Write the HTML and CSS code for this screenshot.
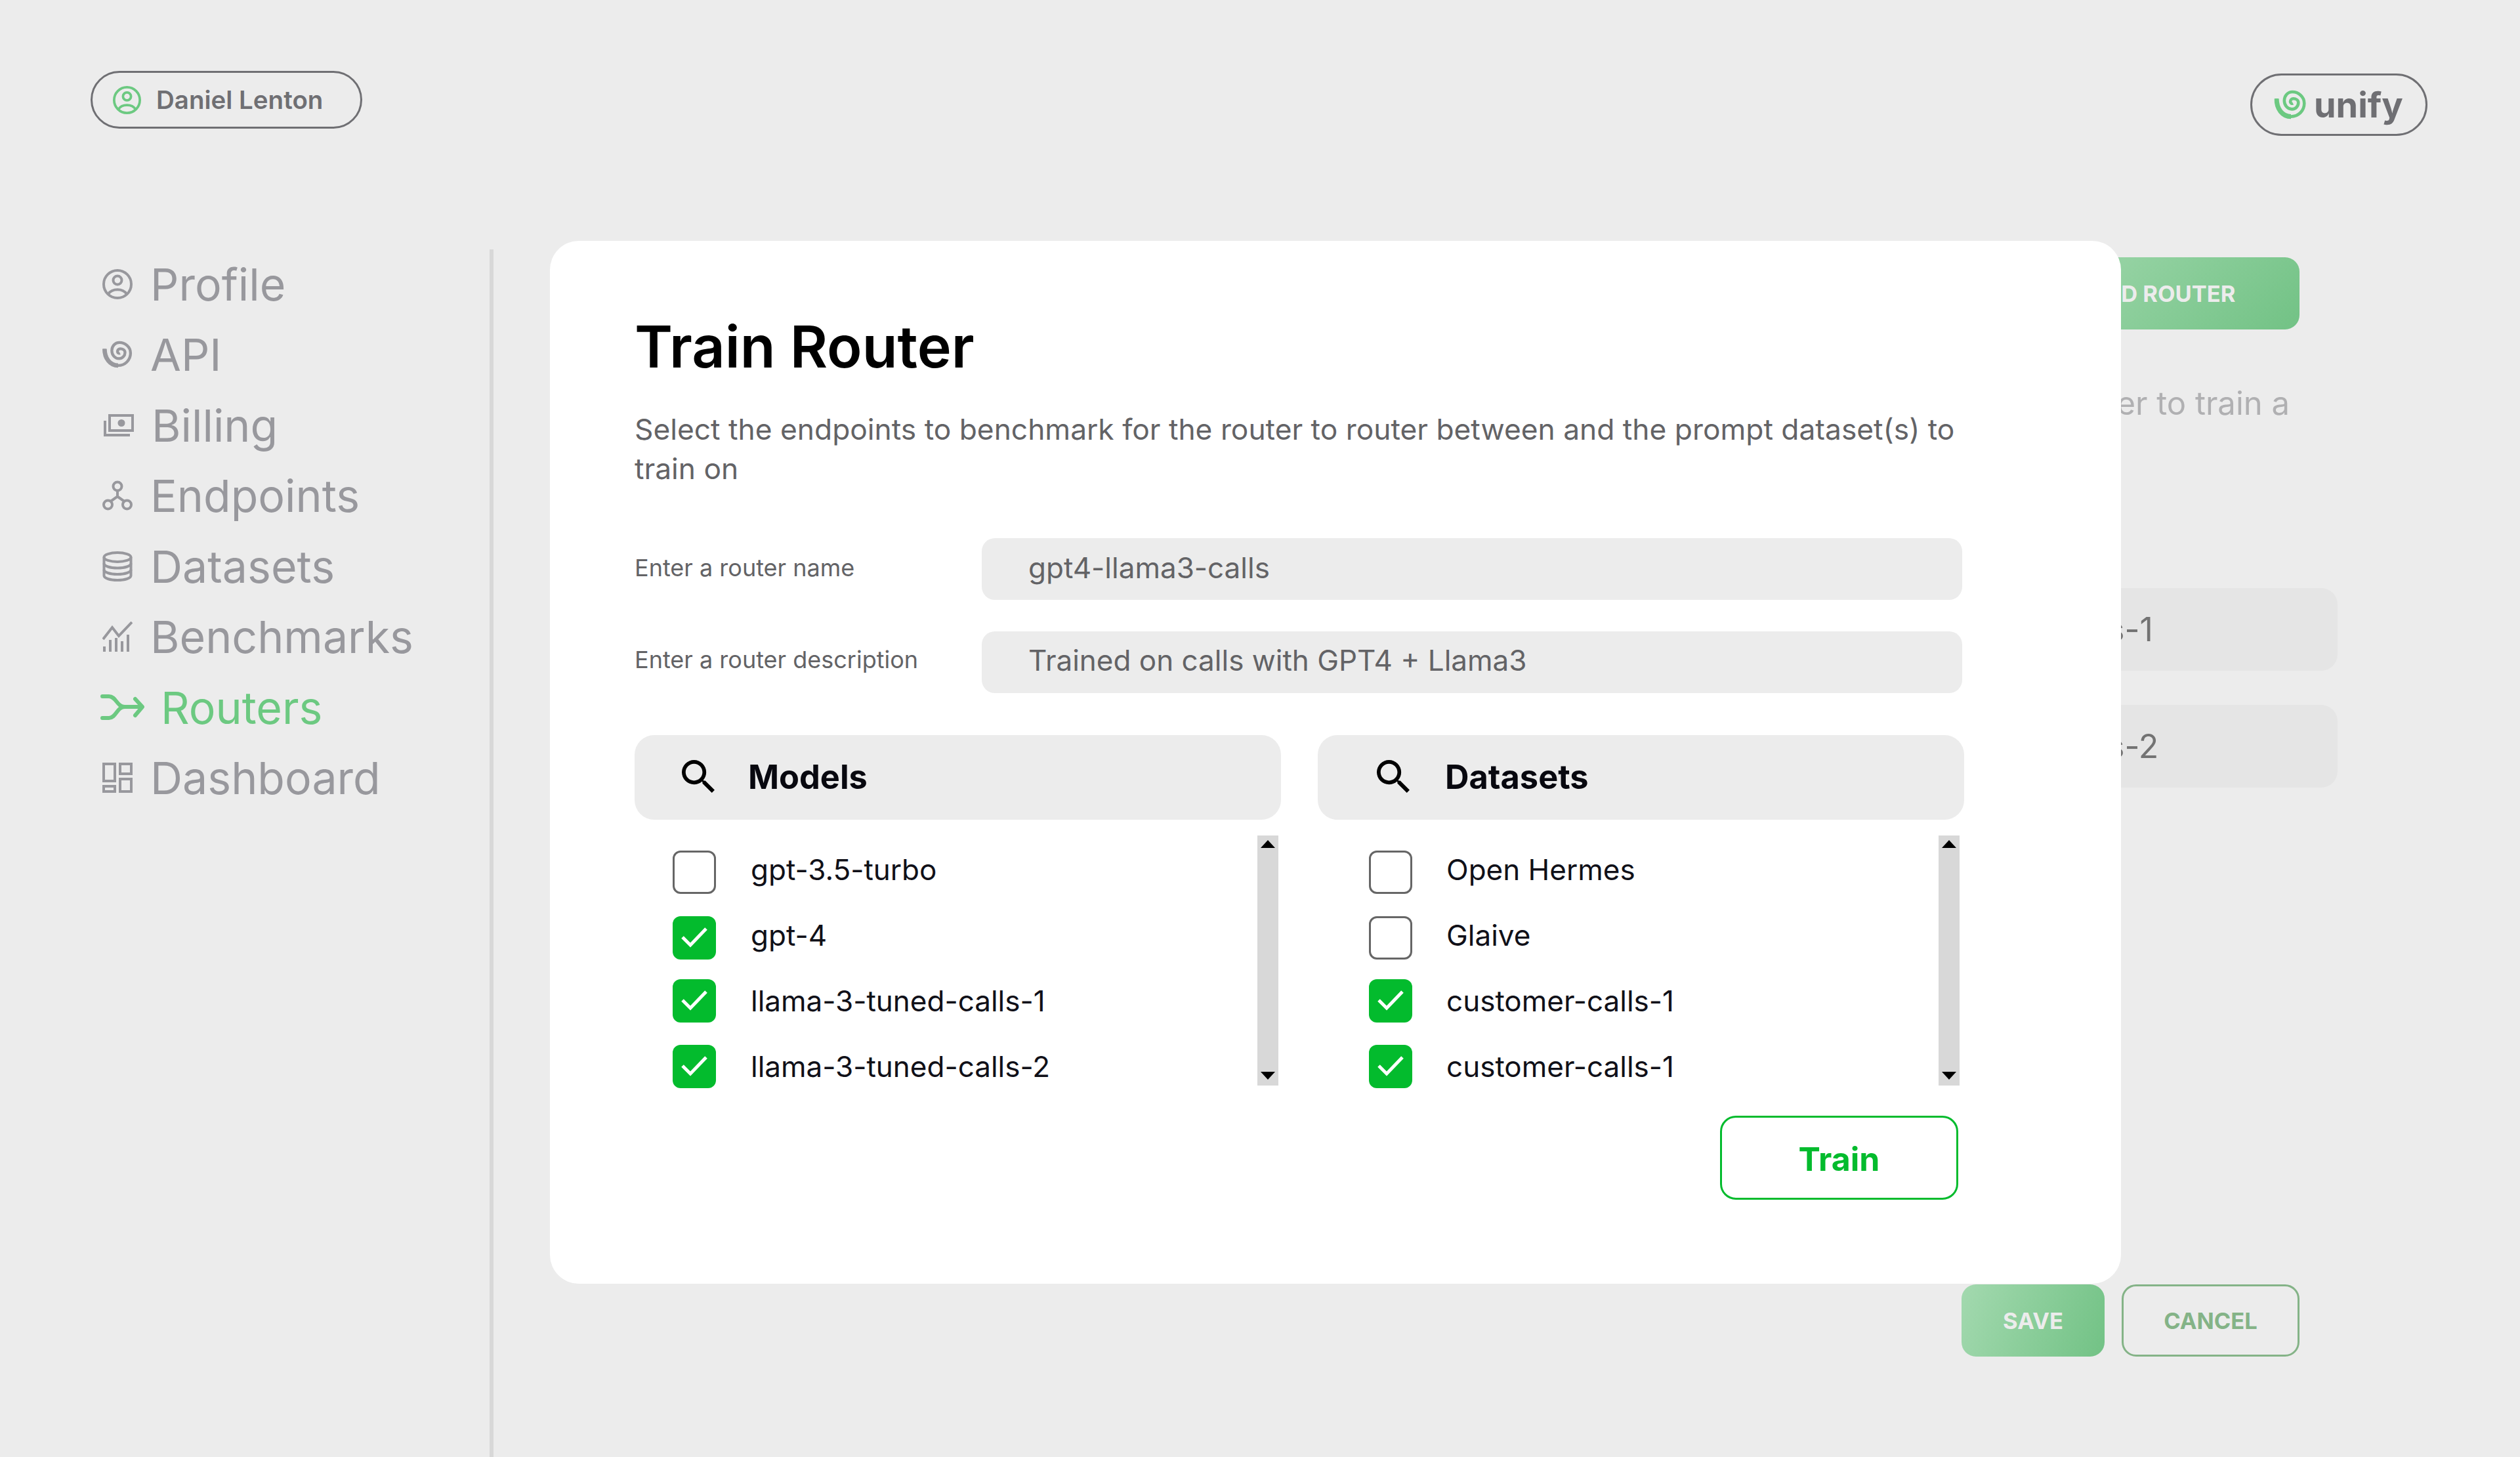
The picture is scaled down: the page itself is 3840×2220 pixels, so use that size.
FILE: index.html
```html
<!DOCTYPE html>
<html lang="en">
<head>
  <meta charset="UTF-8">
  <title>Train Router</title>
  <link rel="stylesheet" href="styles.css">
</head>
<body>

  <div class="page">
    <header class="topbar">
      <div class="user-pill">
        <svg class="user-icon" viewBox="0 0 46 46"><use href="#icon-profile"></use></svg>
        <span>Daniel Lenton</span>
      </div>
      <div class="logo-pill">
        <svg class="logo-icon" viewBox="0 0 48 44"><use href="#icon-spiral"></use></svg>
        <span>unify</span>
      </div>
    </header>

    <nav class="sidebar">
      <a class="nav-item"><svg class="nav-icon" viewBox="0 0 46 46"><use href="#icon-profile"></use></svg>Profile</a>
      <a class="nav-item"><svg class="nav-icon" viewBox="0 0 48 44"><use href="#icon-spiral"></use></svg>API</a>
      <a class="nav-item nav-item--billing">
        <svg class="nav-icon" viewBox="0 0 46 34">
          <path d="M9 2h35v23H9z" fill="none" stroke="currentColor" stroke-width="4"/>
          <circle cx="27" cy="13.5" r="5.5" fill="currentColor"/>
          <path d="M2 10v22h38" fill="none" stroke="currentColor" stroke-width="4"/>
        </svg>Billing</a>
      <a class="nav-item">
        <svg class="nav-icon" viewBox="0 0 46 46" fill="none" stroke="currentColor" stroke-width="4">
          <circle cx="23" cy="9" r="6.5"/>
          <circle cx="8.5" cy="37" r="6.5"/>
          <circle cx="37.5" cy="37" r="6.5"/>
          <path d="M23 15.5v9L12.5 32M23 24.5L33.5 32"/>
        </svg>Endpoints</a>
      <a class="nav-item">
        <svg class="nav-icon" viewBox="0 0 46 46" fill="none" stroke="currentColor" stroke-width="4">
          <ellipse cx="23" cy="9" rx="20.5" ry="7"/>
          <path d="M2.5 9v28c0 4 9 7 20.5 7s20.5-3 20.5-7V9"/>
          <path d="M2.5 18.5c0 4 9 7 20.5 7s20.5-3 20.5-7M2.5 28c0 4 9 7 20.5 7s20.5-3 20.5-7"/>
        </svg>Datasets</a>
      <a class="nav-item">
        <svg class="nav-icon" viewBox="0 0 46 46">
          <path d="M1 27L15 9l10 13L45 1" fill="none" stroke="currentColor" stroke-width="4"/>
          <path d="M1 38h4v8H1zM10 28h4v18h-4zM19 25h4v21h-4zM28 30h4v16h-4zM37 20h4v26h-4z" fill="currentColor"/>
        </svg>Benchmarks</a>
      <a class="nav-item nav-item--active">
        <svg class="nav-icon" viewBox="0 0 67 41" fill="none" stroke="currentColor" stroke-width="6" stroke-linecap="round" stroke-linejoin="round">
          <path d="M3 4h10c11 0 12 16 24 16h26M3 37h10c11 0 12-17 24-17"/>
          <path d="M53 8l11 12-11 13"/>
        </svg>Routers</a>
      <a class="nav-item">
        <svg class="nav-icon" viewBox="0 0 46 46" fill="none" stroke="currentColor" stroke-width="4">
          <path d="M2 2h17v26H2zM27 2h17v15H27zM2 36h17v8H2zM27 25h17v19H27z"/>
        </svg>Dashboard</a>
    </nav>

    <main class="content">
      <button class="add-btn" type="button">ADD ROUTER</button>
      <p class="content-desc">a router to train a</p>
      <div class="router-list">
        <div class="router-row">llama-3-tuned-calls-1</div>
        <div class="router-row">llama-3-tuned-calls-2</div>
      </div>
      <div class="actions">
        <button class="save-btn" type="button">SAVE</button>
        <button class="cancel-btn" type="button">CANCEL</button>
      </div>
    </main>
  </div>

  <div class="modal">
    <h1>Train Router</h1>
    <p class="modal-desc">Select the endpoints to benchmark for the router to router between and the prompt dataset(s) to train on</p>

    <div class="field">
      <label>Enter a router name</label>
      <div class="field-value">gpt4-llama3-calls</div>
    </div>
    <div class="field">
      <label>Enter a router description</label>
      <div class="field-value">Trained on calls with GPT4 + Llama3</div>
    </div>

    <div class="pickers">
      <section class="picker">
        <div class="picker-head">
          <svg class="search-icon" viewBox="0 0 17.5 17.5"><use href="#icon-search"></use></svg>
          <span>Models</span>
        </div>
        <div class="picker-body">
          <ul class="picker-list">
            <li class="item"><span class="check"></span>gpt-3.5-turbo</li>
            <li class="item"><span class="check check--on"><svg viewBox="0 0 66 66"><use href="#icon-check"></use></svg></span>gpt-4</li>
            <li class="item"><span class="check check--on"><svg viewBox="0 0 66 66"><use href="#icon-check"></use></svg></span>llama-3-tuned-calls-1</li>
            <li class="item"><span class="check check--on"><svg viewBox="0 0 66 66"><use href="#icon-check"></use></svg></span>llama-3-tuned-calls-2</li>
          </ul>
          <div class="scrollbar"><i class="arrow-up"></i><i class="arrow-down"></i></div>
        </div>
      </section>

      <section class="picker picker--datasets">
        <div class="picker-head">
          <svg class="search-icon" viewBox="0 0 17.5 17.5"><use href="#icon-search"></use></svg>
          <span>Datasets</span>
        </div>
        <div class="picker-body">
          <ul class="picker-list">
            <li class="item"><span class="check"></span>Open Hermes</li>
            <li class="item"><span class="check"></span>Glaive</li>
            <li class="item"><span class="check check--on"><svg viewBox="0 0 66 66"><use href="#icon-check"></use></svg></span>customer-calls-1</li>
            <li class="item"><span class="check check--on"><svg viewBox="0 0 66 66"><use href="#icon-check"></use></svg></span>customer-calls-1</li>
          </ul>
          <div class="scrollbar"><i class="arrow-up"></i><i class="arrow-down"></i></div>
        </div>
      </section>
    </div>

    <div class="modal-foot">
      <button class="train-btn" type="button">Train</button>
    </div>
  </div>

  <svg class="icon-defs" aria-hidden="true">
    <symbol id="icon-profile" viewBox="0 0 46 46">
      <g fill="none" stroke="currentColor" stroke-width="4">
        <circle cx="23" cy="23" r="21"/>
        <circle cx="23" cy="17" r="6.5"/>
        <path d="M9 38c6-9 22-9 28 0"/>
      </g>
    </symbol>
    <symbol id="icon-spiral" viewBox="0 0 48 44">
      <g fill="none" stroke="currentColor">
        <path d="M3.5 13C3.5 28 12 39.7 25 39.7C36 39.7 44.8 31 44.8 20C44.8 10 36 3 27 3C20 3 15 9 15 16C15 23 20 28.7 26.5 28.7C32 28.7 36 24 36 19C36 15 32 13 28.5 13C26 13 24 15 24 17.5C24 19.5 26 21 28 20" stroke-width="4.5"/>
        <path d="M3.5 13C3.5 28 12 39.7 25 39.7" stroke-width="7"/>
      </g>
    </symbol>
    <symbol id="icon-search" viewBox="3 3 17.5 17.5">
      <path d="M15.5 14h-.79l-.28-.27A6.471 6.471 0 0 0 16 9.5 6.5 6.5 0 1 0 9.5 16c1.61 0 3.09-.59 4.23-1.57l.27.28v.79l5 4.99L20.49 19l-4.99-5zm-6 0C7.01 14 5 11.99 5 9.5S7.01 5 9.5 5 14 7.01 14 9.5 11.99 14 9.5 14z"/>
    </symbol>
    <symbol id="icon-check" viewBox="0 0 66 66">
      <path d="M15 32l12 12 24-25" fill="none" stroke="#fff" stroke-width="5"/>
    </symbol>
  </svg>

</body>
</html>
```

FILE: styles.css
```css
* {
  box-sizing: border-box;
}

body {
  margin: 0;
  width: 3840px;
  height: 2220px;
  overflow: hidden;
  position: relative;
  background: #ececec;
  font-family: 'Inter', 'Liberation Sans', sans-serif;
}

button {
  font-family: inherit;
  cursor: pointer;
}

.icon-defs {
  display: none;
}

.page {
  display: grid;
  grid-template-columns: 752px 1fr;
  grid-template-rows: 380px 1fr;
  height: 2220px;
}

/* top bar */
.topbar {
  grid-column: 1 / 3;
  display: flex;
  justify-content: space-between;
  align-items: flex-start;
  padding: 108px 141px 0 138px;
}

.user-pill {
  display: flex;
  align-items: center;
  gap: 23px;
  width: 414px;
  height: 88px;
  padding-left: 31px;
  border: 3px solid #6f6f73;
  border-radius: 44px;
  font-size: 38.5px;
  font-weight: 600;
  color: #6f6f73;
}

.user-icon {
  width: 43px;
  height: 43px;
  color: #6cc981;
}

.logo-pill {
  display: flex;
  align-items: center;
  gap: 11px;
  width: 270px;
  height: 95px;
  margin-top: 4px;
  padding-left: 33px;
  border: 3px solid #6f6f73;
  border-radius: 48px;
  font-size: 54px;
  font-weight: 700;
  color: #6f6f73;
}

.logo-icon {
  width: 50px;
  height: 45px;
  color: #6cc981;
}

/* sidebar */
.sidebar {
  display: flex;
  flex-direction: column;
  padding-left: 156px;
  border-right: 6px solid #d8d8d8;
}

.nav-item {
  display: flex;
  align-items: center;
  gap: 27px;
  height: 107.5px;
  padding-bottom: 2px;
  font-size: 68px;
  color: #98989d;
}

.nav-icon {
  width: 46px;
  height: 46px;
  flex-shrink: 0;
}

.nav-item--billing .nav-icon {
  height: 34px;
  margin-left: 2px;
}

.nav-item--active {
  color: #6cc981;
  gap: 25px;
}

.nav-item--active .nav-icon {
  width: 67px;
  height: 41px;
  margin-left: -3px;
}

/* page behind the dialog */
.content {
  display: flex;
  flex-direction: column;
  padding: 12px 336px 153px 0;
}

.add-btn {
  align-self: flex-end;
  width: 428px;
  height: 110px;
  padding-left: 14px;
  border: none;
  border-radius: 22px;
  background: linear-gradient(135deg, #a3d9af, #72c285);
  color: #ececec;
  font-size: 34.5px;
  font-weight: 700;
}

.content-desc {
  margin: 83px 15px 0 0;
  line-height: 60px;
  font-size: 49px;
  text-align: right;
  color: #b0b0b2;
}

.router-list {
  align-self: flex-end;
  display: flex;
  flex-direction: column;
  gap: 52px;
  width: 842px;
  margin: 251px -58px 0 0;
}

.router-row {
  height: 126px;
  padding-left: 51px;
  line-height: 126px;
  border-radius: 25px;
  background: #e5e5e5;
  font-size: 50px;
  color: #737373;
}

.actions {
  display: flex;
  justify-content: flex-end;
  gap: 26px;
  margin-top: auto;
}

.save-btn,
.cancel-btn {
  height: 110px;
  border-radius: 22px;
  font-size: 34.5px;
  font-weight: 700;
}

.save-btn {
  width: 218px;
  border: none;
  background: linear-gradient(110deg, #a3d9af, #72c285);
  color: #ececec;
}

.cancel-btn {
  width: 271px;
  border: 3px solid #84b387;
  background: transparent;
  color: #84b387;
}

/* dialog */
.modal {
  position: absolute;
  left: 838px;
  top: 367px;
  width: 2394px;
  height: 1589px;
  padding: 105px 239px 0 129px;
  border-radius: 44px;
  background: #fff;
}

.modal h1 {
  margin: 0;
  line-height: 112px;
  font-size: 88px;
  font-weight: 600;
  color: #000;
}

.modal-desc {
  margin: 40px 0 0;
  line-height: 60px;
  font-size: 44.3px;
  color: #636366;
}

.field {
  display: grid;
  grid-template-columns: 529px 1fr;
  align-items: center;
  height: 94px;
  margin: 48px 3px 0 0;
  color: #636366;
}

.modal-desc + .field {
  margin-top: 76px;
}

.field label {
  padding-bottom: 5px;
  font-size: 36px;
}

.field + .field label {
  padding-bottom: 8px;
}

.field-value {
  height: 94px;
  padding-left: 71px;
  line-height: 91px;
  border-radius: 20px;
  background: #ececec;
  font-size: 44px;
}

.field + .field .field-value {
  line-height: 89px;
}

.pickers {
  display: grid;
  grid-template-columns: 985px 985px;
  gap: 56px;
  margin-top: 64px;
}

.picker-head {
  display: flex;
  align-items: center;
  gap: 51px;
  height: 129px;
  padding: 0 0 3px 72px;
  border-radius: 30px;
  background: #ececec;
  font-size: 50.5px;
  font-weight: 700;
  color: #08080f;
}

.search-icon {
  width: 50px;
  height: 50px;
}

.picker-body {
  display: flex;
  justify-content: space-between;
  align-items: flex-start;
  margin-top: 24px;
  padding-right: 4px;
}

.picker-list {
  margin: 0;
  padding: 19px 0 0 58px;
  list-style: none;
}

/* labels keep an even 100px pitch, the first two boxes sit a little lower */
.item {
  display: flex;
  align-items: flex-start;
  gap: 53px;
  height: 66px;
  line-height: 66px;
  font-size: 44px;
  color: #101018;
}

.item + .item {
  margin-top: 34px;
}

.check {
  width: 66px;
  height: 66px;
  border: 3px solid #666;
  border-radius: 12px;
}

.item:nth-child(-n+2) .check {
  margin-top: 4px;
}

.check--on {
  border: none;
  background: #03bb2d;
}

.check svg {
  display: block;
  width: 66px;
  height: 66px;
}

.scrollbar {
  display: flex;
  flex-direction: column;
  justify-content: space-between;
  align-items: center;
  width: 32px;
  height: 381px;
  padding: 7px 0 9px;
  background: #d8d8d8;
}

.arrow-up {
  border: 11px solid transparent;
  border-top: none;
  border-bottom: 12px solid #000;
}

.arrow-down {
  border: 11px solid transparent;
  border-bottom: none;
  border-top: 12px solid #000;
}

.picker--datasets .picker-head {
  gap: 54px;
  padding-left: 90px;
}

.picker--datasets .picker-list {
  padding-left: 78px;
}

.picker--datasets .item {
  gap: 52px;
}

.picker--datasets .picker-body {
  padding-right: 7px;
}

.modal-foot {
  display: flex;
  justify-content: flex-end;
  margin: 42px 9px 0 0;
}

.train-btn {
  width: 363px;
  height: 128px;
  padding-top: 4px;
  border: 3px solid #03bb2d;
  border-radius: 24px;
  background: #fff;
  color: #03bb2d;
  font-size: 50px;
  font-weight: 700;
}
```
